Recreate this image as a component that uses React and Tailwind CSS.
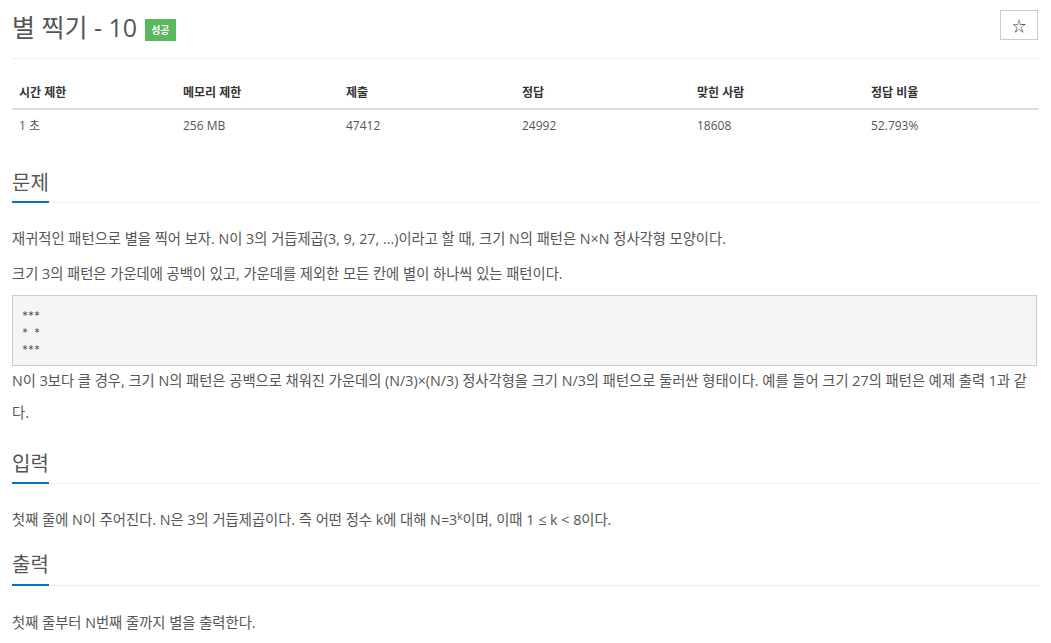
export default function App() {
  const font = { fontFamily: '"Open Sans", "Noto Sans CJK KR", sans-serif' };
  const cols = [
    { h: "시간 제한", v: <><span className="text-[#7a4656]">1</span> 초</>, w: "w-[164px]" },
    { h: "메모리 제한", v: "256 MB", w: "w-[163px]" },
    { h: "제출", v: "47412", w: "w-[176px]" },
    { h: "정답", v: "24992", w: "w-[175px]" },
    { h: "맞힌 사람", v: "18608", w: "w-[174px]" },
    { h: "정답 비율", v: "52.793%", w: "flex-1" },
  ];
  return (
    <div className="bg-white min-h-[643px] px-3 text-[#555]" style={font}>
      <div className="flex items-start justify-between pt-[9px] pb-[16px] border-b border-[#eee]">
        <div className="flex items-center gap-[8px] pt-[3px]">
          <h1 className="text-[25px] leading-[30px] text-[#555]">별 찍기 - 10</h1>
          <span className="mt-[5px] bg-[#5cb85c] text-white text-[10px] font-bold px-[6px] py-[4px] leading-[14px]">성공</span>
        </div>
        <button className="w-[38px] h-[30px] border border-[#ccc] bg-white flex items-center justify-center text-[14px] text-[#333] mr-[1px] mt-[1px]">
          ☆
        </button>
      </div>

      <div className="mt-[19px] text-[12px]">
        <div className="flex border-b-2 border-[#ddd] font-bold text-[#333]">
          {cols.map((c) => (
            <div key={c.h} className={`${c.w} pl-[7px] pt-[5px] pb-[5px] leading-[20px]`}>{c.h}</div>
          ))}
        </div>
        <div className="flex text-[#555]">
          {cols.map((c) => (
            <div key={c.h} className={`${c.w} pl-[7px] pt-[6px] pb-[7px] leading-[20px]`}>{c.v}</div>
          ))}
        </div>
      </div>

      <div className="border-b border-dotted border-[#ddd] mt-[24px]">
        <h2 className="inline-block text-[20px] leading-[32px] text-[#555] border-b-2 border-[#0076c0] pb-[2px] -mb-px">문제</h2>
      </div>
      <div className="text-[14.3px] leading-[32px] pt-[20px]">
        <p className="mb-[3px]">재귀적인 패턴으로 별을 찍어 보자. N이 3의 거듭제곱(3, 9, 27, ...)이라고 할 때, 크기 N의 패턴은 N×N 정사각형 모양이다.</p>
        <p className="mb-[5px]">크기 3의 패턴은 가운데에 공백이 있고, 가운데를 제외한 모든 칸에 별이 하나씩 있는 패턴이다.</p>
        <pre className="bg-[#f5f5f5] border border-[#ccc] mr-[2px] px-[9px] pt-[11px] pb-[7px] text-[10px] leading-[17px] text-[#333]" style={{ fontFamily: '"DejaVu Sans Mono", monospace' }}>{"***\n* *\n***"}</pre>
        <p className="-mt-px">N이 3보다 클 경우, 크기 N의 패턴은 공백으로 채워진 가운데의 (N/3)×(N/3) 정사각형을 크기 N/3의 패턴으로 둘러싼 형태이다. 예를 들어 크기 27의 패턴은 예제 출력 1과 같다.</p>
      </div>

      <div className="border-b border-dotted border-[#ddd] mt-[19px]">
        <h2 className="inline-block text-[20px] leading-[32px] text-[#555] border-b-2 border-[#0076c0] pb-[2px] -mb-px">입력</h2>
      </div>
      <div className="text-[14.3px] leading-[32px] pt-[20px]">
        <p>첫째 줄에 N이 주어진다. N은 3의 거듭제곱이다. 즉 어떤 정수 k에 대해 N=3<sup className="text-[10px]">k</sup>이며, 이때 1 ≤ k &lt; 8이다.</p>
      </div>

      <div className="border-b border-dotted border-[#ddd] mt-[13px]">
        <h2 className="inline-block text-[20px] leading-[32px] text-[#555] border-b-2 border-[#0076c0] pb-[3px] -mb-px">출력</h2>
      </div>
      <div className="text-[14.3px] leading-[32px] pt-[21px]">
        <p>첫째 줄부터 N번째 줄까지 별을 출력한다.</p>
      </div>
    </div>
  );
}
